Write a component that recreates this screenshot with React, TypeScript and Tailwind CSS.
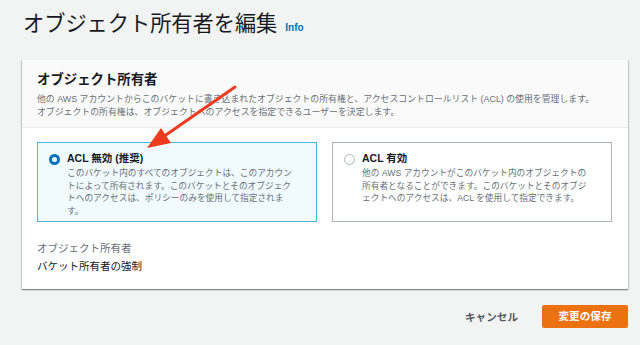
import React from 'react';

const font = { fontFamily: '"Liberation Sans", "Noto Sans CJK JP", sans-serif' };

const RadioTile = ({ selected, label, lines }: { selected: boolean; label: string; lines: string[] }) => (
    <div
        className={`flex h-[80px] w-[280px] gap-[7px] border pl-[11px] pt-[8px] ${
            selected ? 'border-[#44b9d6] bg-[#f1faff]' : 'border-[#aab7b8] bg-white'
        }`}
    >
        <div className="pt-[3px]">
            {selected ? (
                <span className="block h-[11px] w-[11px] rounded-full border-[3px] border-[#0073bb] bg-white" />
            ) : (
                <span className="block h-[11px] w-[11px] rounded-full border border-[#aab7b8] bg-white" />
            )}
        </div>
        <div className="flex flex-col">
            <span className="text-[10.5px] font-bold leading-[14px] text-[#16191f]">{label}</span>
            <p className="mt-[2px] text-[8.7px] leading-[12.7px] text-[#687078] whitespace-nowrap">
                {lines.map((l, i) => (
                    <span key={i} className="block">{l}</span>
                ))}
            </p>
        </div>
    </div>
);

export default function App() {
    return (
        <div className="relative h-[345px] w-[640px] overflow-hidden bg-[#f2f3f3]" style={font}>
            <div className="flex items-end gap-[8px] pl-[23px] pt-[10px]">
                <h1 className="text-[21.2px] leading-[28px] text-[#16191f]">オブジェクト所有者を編集</h1>
                <span className="pb-[4px] text-[10px] font-bold leading-[12px] text-[#0073bb]">Info</span>
            </div>

            <div className="ml-[22px] mt-[22px] w-[606px] bg-white shadow-[0_1px_1px_0_rgba(0,28,36,0.3),1px_1px_1px_0_rgba(0,28,36,0.15),-1px_1px_1px_0_rgba(0,28,36,0.15)]">
                <div className="border-b border-[#eaeded] bg-[#fafafa] px-[15px] pb-[9px] pt-[11px]">
                    <h2 className="text-[13.4px] font-bold leading-[18px] text-[#16191f]">オブジェクト所有者</h2>
                    <p className="mt-[4px] text-[8.9px] leading-[12.5px] text-[#687078] whitespace-nowrap">
                        <span className="block">他の AWS アカウントからこのバケットに書き込まれたオブジェクトの所有権と、アクセスコントロールリスト (ACL) の使用を管理します。</span>
                        <span className="block">オブジェクトの所有権は、オブジェクトへのアクセスを指定できるユーザーを決定します。</span>
                    </p>
                </div>

                <div className="px-[15px] pb-[16px] pt-[14px]">
                    <div className="flex gap-[15px]">
                        <RadioTile
                            selected
                            label="ACL 無効 (推奨)"
                            lines={[
                                'このバケット内のすべてのオブジェクトは、このアカウン',
                                'トによって所有されます。このバケットとそのオブジェク',
                                'トへのアクセスは、ポリシーのみを使用して指定されま',
                                'す。',
                            ]}
                        />
                        <RadioTile
                            selected={false}
                            label="ACL 有効"
                            lines={[
                                '他の AWS アカウントがこのバケット内のオブジェクトの',
                                '所有者となることができます。このバケットとそのオブジ',
                                'ェクトへのアクセスは、ACL を使用して指定できます。',
                            ]}
                        />
                    </div>

                    <div className="mt-[19px] text-[10.5px] leading-[14px] text-[#687078]">オブジェクト所有者</div>
                    <div className="mt-[4px] text-[10.5px] leading-[14px] text-[#16191f]">バケット所有者の強制</div>
                </div>
            </div>

            <div className="mt-[16px] flex items-center justify-end gap-[24px] pr-[12px]">
                <button className="text-[10.6px] font-bold leading-[14px] text-[#545b64]">キャンセル</button>
                <button className="h-[23px] w-[86px] rounded-[2px] bg-[#ec7211] text-[10.6px] font-bold text-white">変更の保存</button>
            </div>

            {/* annotation arrow drawn over the page */}
            <svg className="pointer-events-none absolute inset-0" width="640" height="345" viewBox="0 0 640 345">
                <line x1="235" y1="87" x2="163" y2="137" stroke="#ee3a1f" strokeWidth="3" strokeLinecap="round" />
                <polygon points="147,148 171,143 161,128" fill="#ee3a1f" />
            </svg>
        </div>
    );
}
